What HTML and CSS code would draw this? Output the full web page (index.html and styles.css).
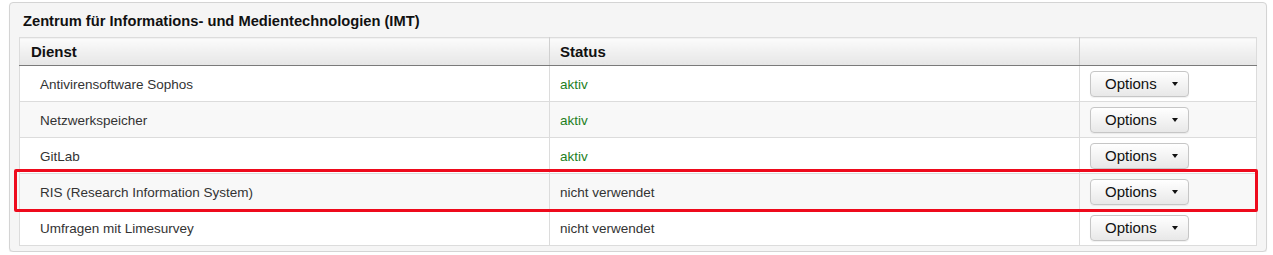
FILE: index.html
```html
<!DOCTYPE html>
<html lang="de">
<head>
<meta charset="utf-8">
<title>Dienste</title>
<link rel="stylesheet" href="styles.css">
</head>
<body>
<section class="panel">
  <h2 class="panel-title">Zentrum für Informations- und Medientechnologien (IMT)</h2>
  <div class="table-wrap">
    <table class="services">
      <colgroup>
        <col class="col-name">
        <col class="col-status">
        <col class="col-actions">
      </colgroup>
      <thead>
        <tr><th>Dienst</th><th>Status</th><th></th></tr>
      </thead>
      <tbody>
        <tr>
          <td class="name">Antivirensoftware Sophos</td>
          <td class="status active">aktiv</td>
          <td class="actions"><button class="btn">Options <span class="caret"></span></button></td>
        </tr>
        <tr>
          <td class="name">Netzwerkspeicher</td>
          <td class="status active">aktiv</td>
          <td class="actions"><button class="btn">Options <span class="caret"></span></button></td>
        </tr>
        <tr>
          <td class="name">GitLab</td>
          <td class="status active">aktiv</td>
          <td class="actions"><button class="btn">Options <span class="caret"></span></button></td>
        </tr>
        <tr>
          <td class="name">RIS (Research Information System)</td>
          <td class="status">nicht verwendet</td>
          <td class="actions"><button class="btn">Options <span class="caret"></span></button></td>
        </tr>
        <tr>
          <td class="name">Umfragen mit Limesurvey</td>
          <td class="status">nicht verwendet</td>
          <td class="actions"><button class="btn">Options <span class="caret"></span></button></td>
        </tr>
      </tbody>
    </table>
    <div class="highlight"></div>
  </div>
</section>
</body>
</html>
```

FILE: styles.css
```css
html, body {
  margin: 0;
  padding: 0;
  background: #ffffff;
}

body {
  font-family: "Liberation Sans", Arial, sans-serif;
  font-size: 13.5px;
  color: #222;
}

.panel {
  margin: 2px 6px 0 9px;
  height: 250px;
  box-sizing: border-box;
  border: 1px solid #d4d4d4;
  border-radius: 4px;
  background: #f5f5f5;
  padding: 0 9px 0 9px;
  box-shadow: 0 1px 1px rgba(0, 0, 0, 0.08);
}

.panel-title {
  margin: 0;
  padding: 10px 0 0 4px;
  height: 24px;
  font-size: 14.7px;
  font-weight: bold;
  line-height: 17px;
  color: #111;
}

.table-wrap {
  position: relative;
}

.services {
  width: 100%;
  border-collapse: collapse;
  table-layout: fixed;
  background: #fff;
  border: 1px solid #dcdcdc;
}

.col-name { width: 530px; }
.col-status { width: 530px; }

.services th {
  height: 27px;
  padding: 0 11px 0 11px;
  text-align: left;
  font-weight: bold;
  font-size: 15px;
  color: #111;
  background: linear-gradient(#fbfbfb, #e6e6e6);
  border-left: 1px solid #d0d0d0;
  border-bottom: 1px solid #7a7a7a;
}

.services th:first-child {
  border-left: none;
}

.services th:nth-child(2) {
  padding-left: 10px;
}

.services td {
  height: 34px;
  padding: 1px 10px 0;
  border-top: 1px solid #dcdcdc;
  border-left: 1px solid #dcdcdc;
  vertical-align: middle;
  font-size: 13.5px;
  color: #333;
}

.services td:first-child {
  border-left: none;
}

.services td.name {
  padding-left: 20px;
}

.services tbody tr:nth-child(even) td {
  background: #f8f8f8;
}

.status.active {
  color: #1e7f1e;
}

.services td.actions {
  padding-top: 0;
  height: 35px;
}

.btn {
  display: inline-flex;
  align-items: center;
  box-sizing: border-box;
  width: 99px;
  height: 26px;
  padding: 0 0 0 14px;
  border: 1px solid #c6c6c6;
  border-radius: 4px;
  background: linear-gradient(#ffffff, #e8e8e8);
  font-family: "Liberation Sans", Arial, sans-serif;
  font-size: 15px;
  color: #111;
  box-shadow: 0 1px 1px rgba(0, 0, 0, 0.06);
}

.caret {
  display: inline-block;
  margin-left: 15px;
  width: 0;
  height: 0;
  border-left: 3.5px solid transparent;
  border-right: 3.5px solid transparent;
  border-top: 4px solid #111;
}

.highlight {
  position: absolute;
  left: -5px;
  top: 132px;
  width: 1244px;
  height: 43px;
  box-sizing: border-box;
  border: 3px solid #ee0a1c;
  border-radius: 2px;
  pointer-events: none;
}
```
